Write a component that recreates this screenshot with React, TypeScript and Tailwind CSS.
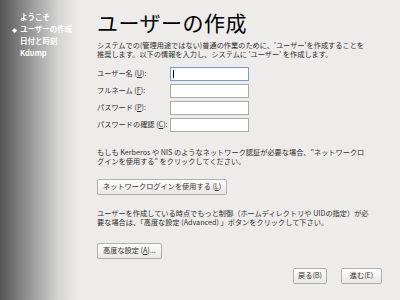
const FONT = { fontFamily: '"Noto Sans CJK JP", "DejaVu Sans", sans-serif' }

const STEPS = ['ようこそ', 'ユーザーの作成', '日付と時刻', 'Kdump']

const FIELDS = [
  { label: 'ユーザー名', key: 'U', focus: true },
  { label: 'フルネーム', key: 'F' },
  { label: 'パスワード', key: 'P' },
  { label: 'パスワードの確認', key: 'C' },
]

function Btn({ children, className = '' }: { children: React.ReactNode; className?: string }) {
  return (
    <button className={`h-[16px] flex items-center justify-center whitespace-nowrap border border-[#b1b0ac] rounded-[2px] bg-gradient-to-b from-[#fdfdfc] to-[#e8e7e4] text-[7.2px] text-[#333] leading-none px-[5px] ${className}`}>
      {children}
    </button>
  )
}

export default function App() {
  return (
    <div className="flex w-[400px] h-[300px] bg-[#edecea] overflow-hidden text-[#2e2e2e]" style={FONT}>
      {/* サイドバー */}
      <div className="w-[90px] shrink-0 bg-[linear-gradient(to_right,#555555_0%,#9a9a9a_35%,#d4d4d3_65%,#edecea_88%)] pt-[11px]">
        {STEPS.map((s, i) => (
          <div key={s} className="flex items-center h-[12px] text-[7.5px] leading-none font-bold text-white">
            <span className="w-[20px] pl-[12px] text-[5px]">{i === 1 ? '◆' : ''}</span>
            <span>{s}</span>
          </div>
        ))}
      </div>

      {/* 本体 */}
      <div className="flex-1 flex flex-col pl-[7px] pr-[18px] text-[7.2px]">
        <h1 className="text-[21px] leading-none text-black mt-[12px] mb-[8px] tracking-[0.5px]">ユーザーの作成</h1>
        <p className="leading-[9px]">
          システムでの(管理用途ではない)普通の作業のために、'ユーザー'を作成することを<br />
          推奨します。以下の情報を入力し、システムに 'ユーザー' を作成します。
        </p>

        <div className="flex flex-col gap-[3px] mt-[8px]">
          {FIELDS.map(f => (
            <div key={f.key} className="flex items-center h-[14px]">
              <span className="w-[73px] leading-none">{f.label} (<u>{f.key}</u>):</span>
              <div className={`w-[79px] h-[14px] bg-white border ${f.focus ? 'border-[#7a9cc8]' : 'border-[#a9a9a6]'} flex items-center`}>
                {f.focus && <div className="w-px h-[8px] bg-black ml-[2px]" />}
              </div>
            </div>
          ))}
        </div>

        <p className="leading-[9px] mt-[16px]">
          もしも Kerberos や NIS のようなネットワーク認証が必要な場合、"ネットワークロ<br />
          グインを使用する" をクリックしてください。
        </p>
        <div className="flex mt-[13px]">
          <Btn>ネットワークログインを使用する (<u>L</u>)</Btn>
        </div>

        <p className="leading-[9px] mt-[14px]">
          ユーザーを作成している時点でもっと制御（ホームディレクトリや UIDの指定）が必<br />
          要な場合は、「高度な設定 (Advanced) 」ボタンをクリックして下さい。
        </p>
        <div className="flex mt-[16px]">
          <Btn>高度な設定 (<u>A</u>)...</Btn>
        </div>

        <div className="flex justify-end gap-[14px] mt-[9px]">
          <Btn className="w-[34px] px-0">戻る(B)</Btn>
          <Btn className="w-[41px] px-0">進む(E)</Btn>
        </div>
      </div>
    </div>
  )
}
